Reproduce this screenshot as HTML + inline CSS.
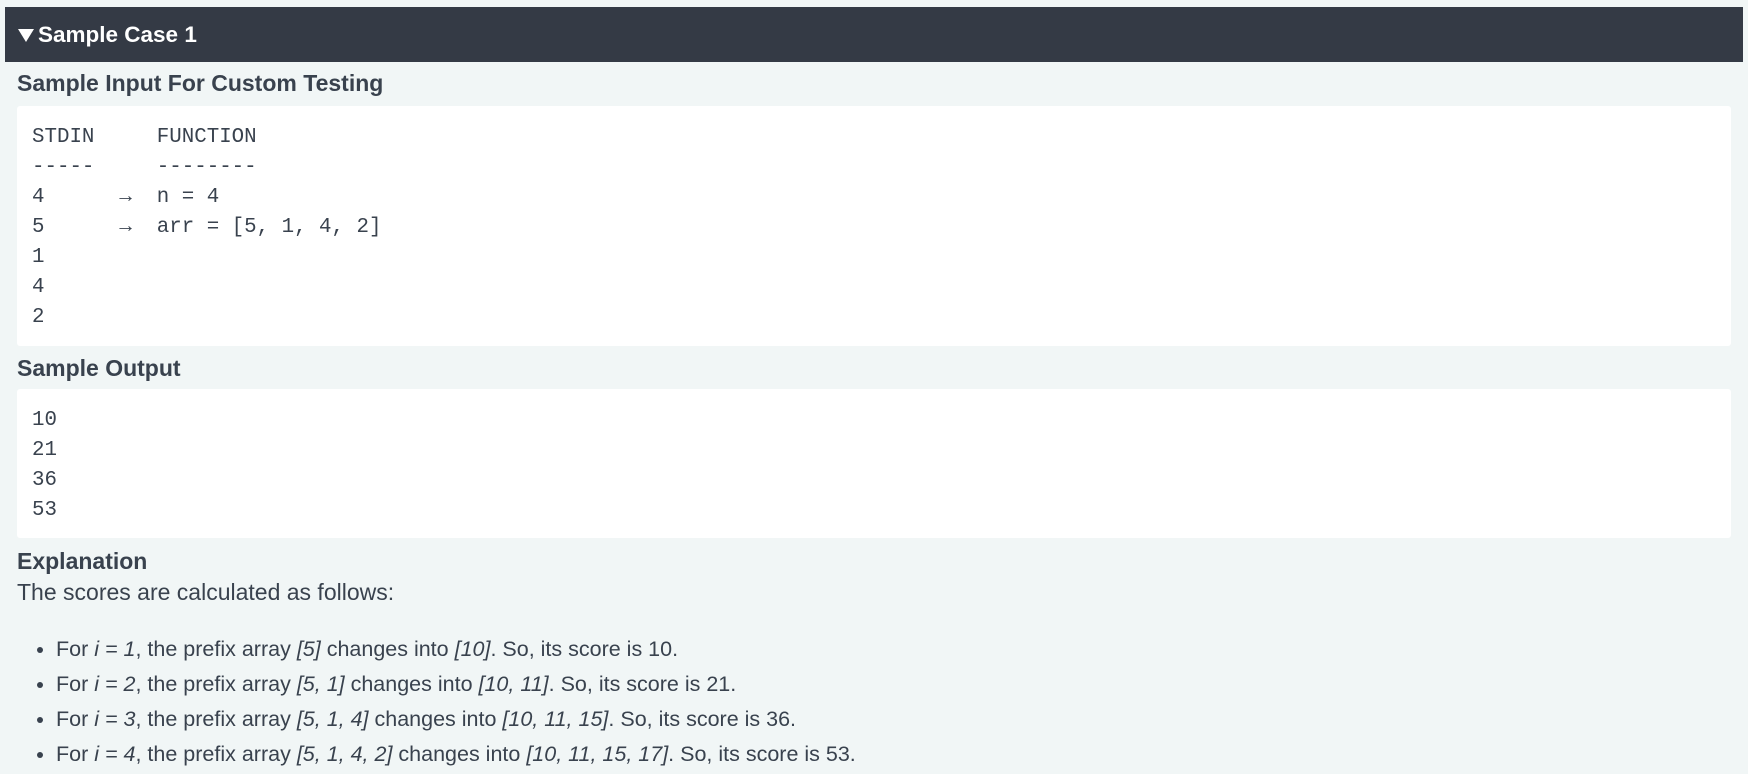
<!DOCTYPE html>
<html><head><meta charset="utf-8"><style>
html,body{margin:0;padding:0;background:#f1f6f6;width:1748px;height:774px;overflow:hidden;color:#39424e;font-family:"Liberation Sans",sans-serif;}
.hdr{position:absolute;left:5px;top:7px;width:1738px;height:55px;background:#343a45;color:#fff;font-weight:bold;font-size:22.5px;line-height:55px;}
.hdr span{position:absolute;left:33px;}
.tri{position:absolute;left:13px;top:22px;width:0;height:0;border-left:8px solid transparent;border-right:8px solid transparent;border-top:13px solid #fff;}
.h{position:absolute;left:17px;font-weight:bold;font-size:23px;}
.box{position:absolute;left:17px;width:1714px;background:#fff;border-radius:3px;}
.code{position:absolute;left:32px;font-family:"Liberation Mono",monospace;font-size:20.8px;line-height:30px;white-space:pre;color:#39424e;}
.t{position:absolute;left:17px;font-size:23px;}
ul{position:absolute;left:17px;margin:0;padding:0 0 0 39px;font-size:21.5px;list-style:disc;}
li{height:35px;line-height:35px;}
</style></head><body>
<div class="hdr"><div class="tri"></div><span>Sample Case 1</span></div>
<div class="h" style="top:70px">Sample Input For Custom Testing</div>
<div class="box" style="top:106px;height:240px"></div>
<div class="code" style="top:123px">STDIN     FUNCTION
-----     --------
4      →  n = 4
5      →  arr = [5, 1, 4, 2]
1
4
2</div>
<div class="h" style="top:355px">Sample Output</div>
<div class="box" style="top:389px;height:149px"></div>
<div class="code" style="top:406px">10
21
36
53</div>
<div class="h" style="top:548px">Explanation</div>
<div class="t" style="top:579px">The scores are calculated as follows:</div>
<ul style="top:632px">
<li>For <i>i = 1</i>, the prefix array <i>[5]</i> changes into <i>[10]</i>. So, its score is 10.</li>
<li>For <i>i = 2</i>, the prefix array <i>[5, 1]</i> changes into <i>[10, 11]</i>. So, its score is 21.</li>
<li>For <i>i = 3</i>, the prefix array <i>[5, 1, 4]</i> changes into <i>[10, 11, 15]</i>. So, its score is 36.</li>
<li>For <i>i = 4</i>, the prefix array <i>[5, 1, 4, 2]</i> changes into <i>[10, 11, 15, 17]</i>. So, its score is 53.</li>
</ul>
</body></html>
